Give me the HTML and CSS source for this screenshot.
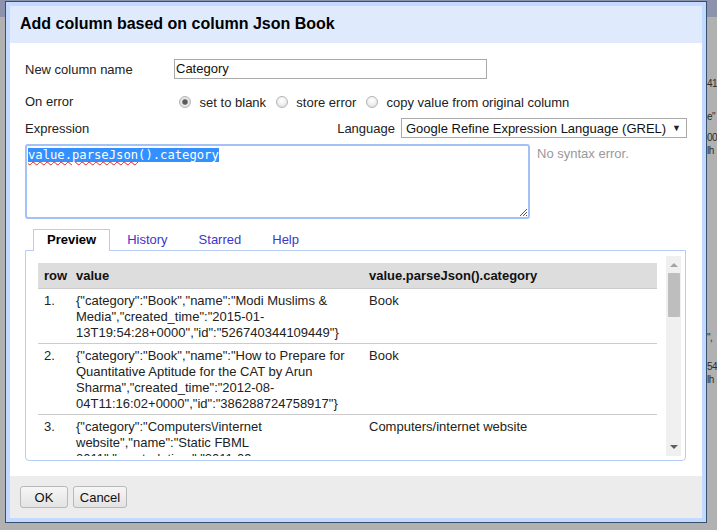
FILE: index.html
```html
<!DOCTYPE html>
<html>
<head>
<meta charset="utf-8">
<title>Add column</title>
<link rel="stylesheet" href="styles.css">
</head>
<body>
<div class="backdrop">
  <div class="band"></div>
  <div class="strip">
    <div class="frag f1">41</div>
    <div class="frag f2">e"</div>
    <div class="frag f3">00</div>
    <div class="frag f4">lh</div>
    <div class="frag f5">",</div>
    <div class="frag f6">54</div>
    <div class="frag f7">lh</div>
  </div>
</div>

<div class="dialog">
  <div class="title">Add column based on column Json Book</div>
  <div class="content">
    <div class="row r1">
      <div class="label">New column name</div>
      <div class="text-input">Category</div>
    </div>
    <div class="row r2">
      <div class="label">On error</div>
      <div class="radios">
        <input type="radio" name="onerror" checked> set to blank
        <input type="radio" name="onerror"> store error
        <input type="radio" name="onerror"> copy value from original column
      </div>
    </div>
    <div class="row r3">
      <div class="label">Expression</div>
      <div class="lang">
        <span>Language</span>
        <div class="select"><span>Google Refine Expression Language (GREL)</span><span class="arrow">▼</span></div>
      </div>
    </div>
    <div class="expr-row">
      <div class="textarea">
        <span class="sel"><span class="spell">value.parseJson</span>().category</span>
        <svg class="grip" width="8" height="8" viewBox="0 0 8 8"><path d="M1 8 L8 1 M4 8 L8 4 M7 8 L8 7" stroke="#555" stroke-width="1" fill="none"/></svg>
      </div>
      <div class="status">No syntax error.</div>
    </div>

    <ul class="tabs">
      <li class="tab active">Preview</li>
      <li class="tab">History</li>
      <li class="tab">Starred</li>
      <li class="tab">Help</li>
    </ul>
    <div class="panel">
      <div class="scroller">
        <div class="view">
          <table class="preview">
            <colgroup><col class="c1"><col class="c2"><col class="c3"></colgroup>
            <thead>
              <tr><th>row</th><th>value</th><th>value.parseJson().category</th></tr>
            </thead>
            <tbody>
              <tr>
                <td>1.</td>
                <td>{"category":"Book","name":"Modi Muslims &amp;<br>Media","created_time":"2015-01-<br>13T19:54:28+0000","id":"526740344109449"}</td>
                <td>Book</td>
              </tr>
              <tr>
                <td>2.</td>
                <td>{"category":"Book","name":"How to Prepare for<br>Quantitative Aptitude for the CAT by Arun<br>Sharma","created_time":"2012-08-<br>04T11:16:02+0000","id":"386288724758917"}</td>
                <td>Book</td>
              </tr>
              <tr>
                <td>3.</td>
                <td>{"category":"Computers\/internet<br>website","name":"Static FBML<br>2011","created_time":"2011-09-<br>27T08:34:17+0000","id":"279381712085213"}</td>
                <td>Computers/internet website</td>
              </tr>
            </tbody>
          </table>
        </div>
        <div class="scrollbar">
          <div class="sb-up"></div>
          <div class="sb-thumb"></div>
          <div class="sb-track"></div>
          <div class="sb-down"></div>
        </div>
      </div>
    </div>
  </div>
  <div class="footer">
    <button class="btn ok">OK</button>
    <button class="btn cancel">Cancel</button>
  </div>
</div>
</body>
</html>
```

FILE: styles.css
```css
html, body {
  margin: 0;
  padding: 0;
}
body {
  width: 717px;
  height: 530px;
  overflow: hidden;
  position: relative;
  background: #b1b1b1;
  font-family: "Liberation Sans", Arial, sans-serif;
}

/* page behind the dialog */
.backdrop {
  width: 717px;
  height: 530px;
  display: flex;
  flex-direction: column;
}
.band {
  height: 17px;
  background: #8e93ad;
}
.strip {
  margin-left: 707px;
  display: flex;
  flex-direction: column;
  font-size: 10px;
  letter-spacing: -0.5px;
  color: #2c2c2c;
  white-space: nowrap;
  width: 10px;
}
.frag { height: 13px; line-height: 13px; }
.f1 { margin-top: 60px; }
.f2 { margin-top: 20px; }
.f3 { margin-top: 8px; }
.f4 { margin-top: 0; }
.f5 { margin-top: 174px; }
.f6 { margin-top: 16px; }
.f7 { margin-top: 0; }

/* dialog */
.dialog {
  position: absolute;
  left: 5px;
  top: 1px;
  width: 702px;
  height: 522px;
  box-sizing: border-box;
  border: 1px solid #34506c;
  background: #c3d9ff;
  padding: 4px;
  display: flex;
  flex-direction: column;
}
.title {
  height: 37px;
  flex: none;
  background: #dfeafd;
  padding-left: 10px;
  font-weight: bold;
  font-size: 16px;
  line-height: 35px;
  color: #000;
}
.content {
  height: 433px;
  flex: none;
  box-sizing: border-box;
  background: #fff;
  padding: 14px 15px 0;
  font-size: 13px;
  color: #222;
}
.row {
  display: flex;
  align-items: center;
  height: 24px;
}
.label {
  width: 149px;
  flex: none;
}
.r2 { margin-top: 8px; }
.r3 { margin-top: 3px; justify-content: space-between; }

.text-input {
  width: 313px;
  height: 20px;
  box-sizing: border-box;
  border: 1px solid #a9a9a9;
  padding: 0 1px;
  line-height: 18px;
  color: #111;
}

.radios {
  color: #222;
}
.radios input {
  -webkit-appearance: none;
  appearance: none;
  width: 12px;
  height: 12px;
  margin: 3px 5px 0 6px;
  border: 1px solid #b4b4b4;
  border-radius: 50%;
  background: radial-gradient(circle at 50% 35%, #ffffff 0%, #f2f2f2 45%, #d6d6d6 100%);
  box-sizing: border-box;
  vertical-align: -1px;
  position: relative;
}
.radios input:first-child {
  margin-left: 5px;
}
.radios input:checked {
  background: radial-gradient(circle, #5a5a5a 0, #5a5a5a 2px, #8c8c8c 2.6px, #e9e9e9 3.4px, #d8d8d8 100%);
}

.lang {
  display: flex;
  align-items: center;
  gap: 6px;
}
.select {
  width: 286px;
  height: 20px;
  box-sizing: border-box;
  border: 1px solid #a9a9a9;
  display: flex;
  align-items: center;
  justify-content: space-between;
  padding: 0 5px 0 4px;
  font-size: 13px;
  color: #111;
}
.select .arrow {
  font-size: 9px;
  color: #222;
}

.expr-row {
  display: flex;
  margin-top: 4px;
  gap: 7px;
}
.textarea {
  width: 505px;
  height: 75px;
  box-sizing: border-box;
  border: 2px solid #a4c1f5;
  border-radius: 3px;
  padding: 2px 1px;
  position: relative;
  font-family: "DejaVu Sans Mono", "Liberation Mono", monospace;
  font-size: 12.2px;
  line-height: 14px;
}
.sel {
  background: #3390ff;
  color: #fff;
}
.spell {
  text-decoration: underline wavy #e02020;
  text-decoration-thickness: 1px;
  text-underline-offset: 2px;
}
.grip {
  position: absolute;
  right: 1px;
  bottom: 1px;
}
.status {
  color: #999;
  padding-top: 2px;
}

.tabs {
  list-style: none;
  margin: 10px 0 0;
  padding: 0 0 0 8px;
  display: flex;
  height: 21px;
  position: relative;
  z-index: 1;
}
.tab {
  padding: 0 13px;
  margin-right: 3px;
  line-height: 20px;
  height: 21px;
  box-sizing: border-box;
  color: #3d35cc;
  border: 1px solid transparent;
  border-bottom: 0;
}
.tab.active {
  background: #fff;
  border-color: #b6cdf5;
  color: #000;
  font-weight: bold;
  height: 22px;
}

.panel {
  width: 661px;
  height: 211px;
  box-sizing: border-box;
  border: 1px solid #b6cdf5;
  border-radius: 0 0 4px 4px;
  padding: 5px 4px 4px 12px;
}
.scroller {
  display: flex;
  height: 200px;
}
.view {
  width: 628px;
  height: 200px;
  overflow: hidden;
}
.preview {
  margin-top: 7px;
  width: 619px;
  border-collapse: collapse;
  table-layout: fixed;
  font-size: 13px;
  line-height: 16px;
  color: #222;
}
.c1 { width: 32px; }
.c2 { width: 293px; }
.c3 { width: 294px; }
.preview th {
  background: #dddddd;
  text-align: left;
  height: 25px;
  padding: 0 6px;
  border-bottom: 1px solid #cccccc;
  color: #111;
}
.preview td {
  padding: 4px 6px 2px;
  vertical-align: top;
  border-bottom: 1px solid #cccccc;
}

.scrollbar {
  width: 15px;
  height: 200px;
  background: #f0f0f0;
  display: flex;
  flex-direction: column;
  align-items: center;
}
.sb-up {
  margin-top: 7px;
  width: 0;
  height: 0;
  border-left: 4px solid transparent;
  border-right: 4px solid transparent;
  border-bottom: 4px solid #a3a3a3;
}
.sb-thumb {
  margin-top: 6px;
  width: 12px;
  height: 44px;
  background: #bebebe;
  border-radius: 1px;
}
.sb-track { flex: 1; }
.sb-down {
  margin-bottom: 7px;
  width: 0;
  height: 0;
  border-left: 4px solid transparent;
  border-right: 4px solid transparent;
  border-top: 4px solid #5f5f5f;
}

.footer {
  height: 42px;
  flex: none;
  box-sizing: border-box;
  background: #ececec;
  padding: 10px 10px 0;
  display: flex;
  gap: 5px;
  align-items: flex-start;
}
.btn {
  height: 22px;
  border: 1px solid #b9b9b9;
  border-radius: 3px;
  background: linear-gradient(#f6f6f6, #e3e3e3);
  font-family: "Liberation Sans", Arial, sans-serif;
  font-size: 13px;
  color: #111;
  padding: 0;
}
.ok { width: 48px; }
.cancel { width: 54px; }
```
